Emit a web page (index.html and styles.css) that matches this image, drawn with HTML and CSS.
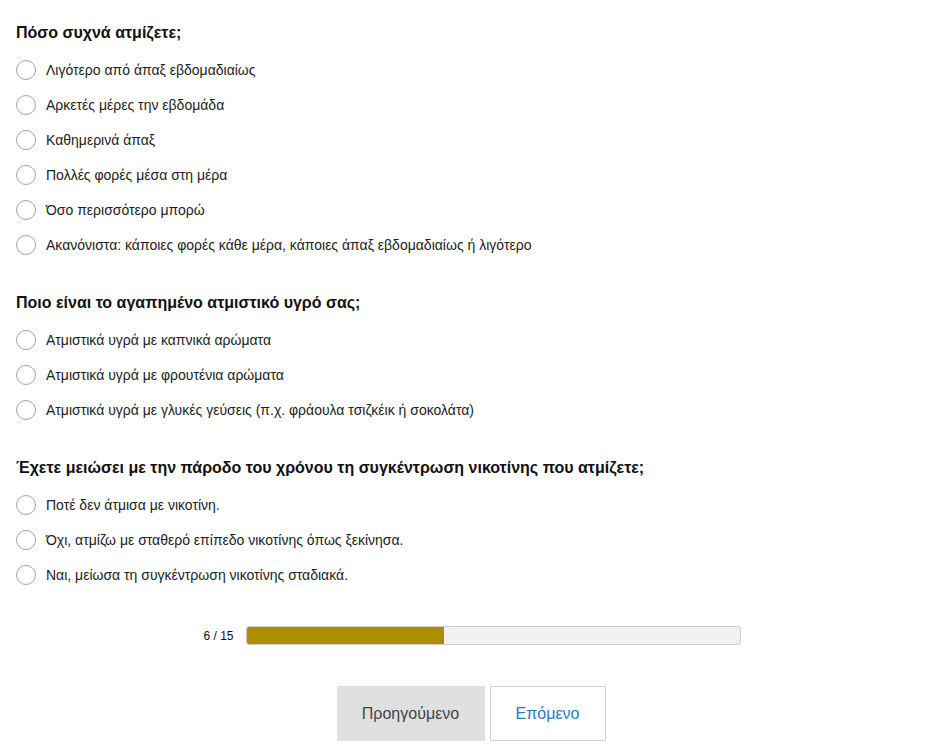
FILE: index.html
```html
<!DOCTYPE html>
<html lang="el">
<head>
  <meta charset="UTF-8">
  <title>Ερωτηματολόγιο</title>
  <link rel="stylesheet" href="styles.css">
</head>
<body>

<div class="survey">
  <div class="question">
    <h3>Πόσο συχνά ατμίζετε;</h3>
    <label class="option"><span class="radio"></span>Λιγότερο από άπαξ εβδομαδιαίως</label>
    <label class="option"><span class="radio"></span>Αρκετές μέρες την εβδομάδα</label>
    <label class="option"><span class="radio"></span>Καθημερινά άπαξ</label>
    <label class="option"><span class="radio"></span>Πολλές φορές μέσα στη μέρα</label>
    <label class="option"><span class="radio"></span>Όσο περισσότερο μπορώ</label>
    <label class="option"><span class="radio"></span>Ακανόνιστα: κάποιες φορές κάθε μέρα, κάποιες άπαξ εβδομαδιαίως ή λιγότερο</label>
  </div>

  <div class="question">
    <h3>Ποιο είναι το αγαπημένο ατμιστικό υγρό σας;</h3>
    <label class="option"><span class="radio"></span>Ατμιστικά υγρά με καπνικά αρώματα</label>
    <label class="option"><span class="radio"></span>Ατμιστικά υγρά με φρουτένια αρώματα</label>
    <label class="option"><span class="radio"></span>Ατμιστικά υγρά με γλυκές γεύσεις (π.χ. φράουλα τσιζκέικ ή σοκολάτα)</label>
  </div>

  <div class="question">
    <h3>Έχετε μειώσει με την πάροδο του χρόνου τη συγκέντρωση νικοτίνης που ατμίζετε;</h3>
    <label class="option"><span class="radio"></span>Ποτέ δεν άτμισα με νικοτίνη.</label>
    <label class="option"><span class="radio"></span>Όχι, ατμίζω με σταθερό επίπεδο νικοτίνης όπως ξεκίνησα.</label>
    <label class="option"><span class="radio"></span>Ναι, μείωσα τη συγκέντρωση νικοτίνης σταδιακά.</label>
  </div>
</div>

<div class="progress">
  <span class="progress-label">6 / 15</span>
  <div class="progress-bar">
    <div class="progress-fill" style="width: 40%"></div>
  </div>
</div>

<div class="nav">
  <button class="btn btn-prev">Προηγούμενο</button>
  <button class="btn btn-next">Επόμενο</button>
</div>

</body>
</html>
```

FILE: styles.css
```css
body {
  margin: 0;
  font-family: "Liberation Sans", Arial, sans-serif;
  color: #222;
  background: #fff;
}
.survey {
  padding: 23px 16px 0;
}
.question {
  margin-bottom: 31px;
}
.question:last-child {
  margin-bottom: 0;
}
.question h3 {
  margin: 0 0 9px;
  font-size: 16px;
  line-height: 20px;
  font-weight: bold;
  color: #111;
}
.option {
  display: flex;
  align-items: center;
  height: 35px;
  font-size: 14px;
  cursor: pointer;
}
.radio {
  width: 18px;
  height: 18px;
  border: 1px solid #a3a3a3;
  border-radius: 50%;
  margin-right: 10px;
  flex-shrink: 0;
}
.progress {
  display: flex;
  align-items: center;
  justify-content: center;
  gap: 12px;
  margin-top: 34px;
  padding-right: 2px;
}
.progress-label {
  font-size: 12px;
  color: #111;
}
.progress-bar {
  width: 493px;
  height: 17px;
  border: 1px solid #ccc;
  border-radius: 3px;
  background: #f1f1f1;
  overflow: hidden;
}
.progress-fill {
  height: 100%;
  background: #ac8f00;
}
.nav {
  display: flex;
  justify-content: center;
  gap: 5px;
  margin-top: 41px;
  padding-right: 4px;
}
.btn {
  height: 55px;
  font-family: "Liberation Sans", Arial, sans-serif;
  font-size: 16px;
  border-radius: 0;
  box-shadow: 0 2px 0 #ececec;
  cursor: pointer;
}
.btn-prev {
  width: 148px;
  background: #e0e0e0;
  border: 0;
  color: #444;
}
.btn-next {
  width: 116px;
  background: #fff;
  border: 1px solid #d3d3d3;
  color: #2a7abf;
}
```
